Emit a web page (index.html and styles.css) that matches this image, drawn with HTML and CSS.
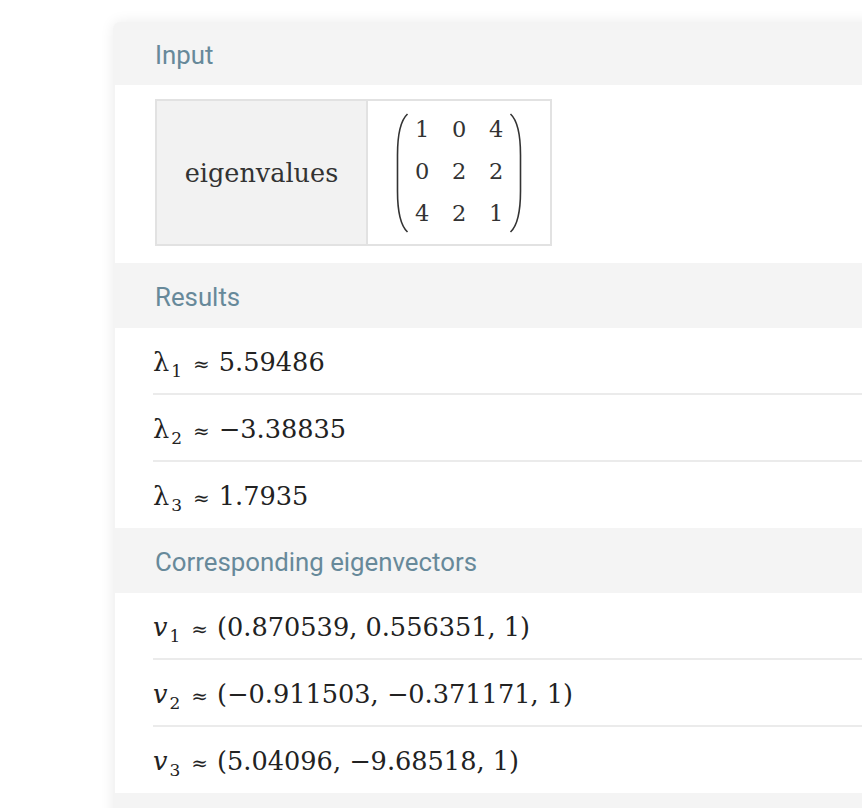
FILE: index.html
```html
<!DOCTYPE html>
<html>
<head>
<meta charset="utf-8">
<link rel="stylesheet" href="styles.css">
</head>
<body>
<div class="page">
  <div class="card">
    <div class="pod-head first">Input</div>
    <div class="pod-body input-body">
      <table class="input-table">
        <tr>
          <td class="label-cell">eigenvalues</td>
          <td class="matrix-cell">
            <div class="matrix">
              <svg class="paren" width="14" height="120" viewBox="0 0 14 120"><path d="M12.5,1 C6,7 2.5,20 2.5,42 L2.5,78 C2.5,100 6,113 12.5,119" fill="none" stroke="#333" stroke-width="1.6"/></svg>
              <div class="grid">
                <span>1</span><span>0</span><span>4</span>
                <span>0</span><span>2</span><span>2</span>
                <span>4</span><span>2</span><span>1</span>
              </div>
              <svg class="paren" width="14" height="120" viewBox="0 0 14 120"><path d="M1.5,1 C8,7 11.5,20 11.5,42 L11.5,78 C11.5,100 8,113 1.5,119" fill="none" stroke="#333" stroke-width="1.6"/></svg>
            </div>
          </td>
        </tr>
      </table>
    </div>

    <div class="pod-head">Results</div>
    <div class="pod-body">
      <div class="row"><span class="math"><span class="lam">λ</span><sub>1</sub><span class="op">≈</span>5.59486</span></div>
      <div class="row"><span class="math"><span class="lam">λ</span><sub>2</sub><span class="op">≈</span>−3.38835</span></div>
      <div class="row"><span class="math"><span class="lam">λ</span><sub>3</sub><span class="op">≈</span>1.7935</span></div>
    </div>

    <div class="pod-head">Corresponding eigenvectors</div>
    <div class="pod-body">
      <div class="row"><span class="math"><i>v</i><sub>1</sub><span class="op">≈</span>(0.870539, 0.556351, 1)</span></div>
      <div class="row"><span class="math"><i>v</i><sub>2</sub><span class="op">≈</span>(−0.911503, −0.371171, 1)</span></div>
      <div class="row"><span class="math"><i>v</i><sub>3</sub><span class="op">≈</span>(5.04096, −9.68518, 1)</span></div>
    </div>
    <div class="pod-foot"></div>
  </div>
</div>
</body>
</html>
```

FILE: styles.css
```css
html, body {
  margin: 0;
  padding: 0;
  background: #ffffff;
  overflow: hidden;
}

.page {
  height: 808px;
  padding: 22px 0 0 113px;
  box-sizing: border-box;
  overflow: hidden;
}

.card {
  width: 780px;
  background: #f4f4f4;
  border-radius: 7px 0 0 0;
  box-shadow: 0 0 14px rgba(0, 0, 0, 0.08);
  padding-left: 2px;
}

.pod-head {
  height: 65px;
  box-sizing: border-box;
  padding: 20px 0 0 40px;
  font-family: Roboto, "Liberation Sans", sans-serif;
  font-size: 25.8px;
  line-height: 28px;
  color: #67899a;
}

.pod-head.first {
  height: 63px;
  padding-top: 19px;
}

.pod-body {
  background: #ffffff;
}

.input-body {
  padding: 14px 0 17px 40px;
}

.input-table {
  border-collapse: collapse;
  border: 2px solid #e2e2e2;
}

.input-table td {
  padding: 0;
  border: 2px solid #e2e2e2;
}

.label-cell {
  width: 209px;
  height: 143px;
  background: #f2f2f2;
  text-align: center;
  font-family: "DejaVu Serif", serif;
  font-size: 25.5px;
  color: #333;
}

.matrix-cell {
  width: 182px;
  background: #ffffff;
}

.matrix {
  display: flex;
  align-items: center;
  justify-content: center;
  gap: 6px;
}

.grid {
  display: grid;
  grid-template-columns: repeat(3, 14px);
  column-gap: 23px;
  font-family: "DejaVu Serif", serif;
  font-size: 22.5px;
  line-height: 42px;
  color: #333;
  text-align: center;
  margin-top: -3px;
}

.row {
  height: 67px;
  margin-left: 38px;
  display: flex;
  align-items: center;
  border-bottom: 2px solid #ebebeb;
  box-sizing: border-box;
}

.row:last-child {
  border-bottom: none;
  height: 66px;
}

.math {
  font-family: "DejaVu Serif", serif;
  font-size: 25.6px;
  color: #222;
  white-space: pre;
  padding-top: 2px;
}

.math sub {
  font-size: 17px;
  vertical-align: -6px;
  line-height: 0;
  margin-left: 2px;
}

.math i {
  font-style: italic;
}

.lam {
  font-style: normal;
}

.op {
  font-size: 20px;
  margin: 0 9px 0 11px;
}

.pod-foot {
  height: 40px;
}
```
